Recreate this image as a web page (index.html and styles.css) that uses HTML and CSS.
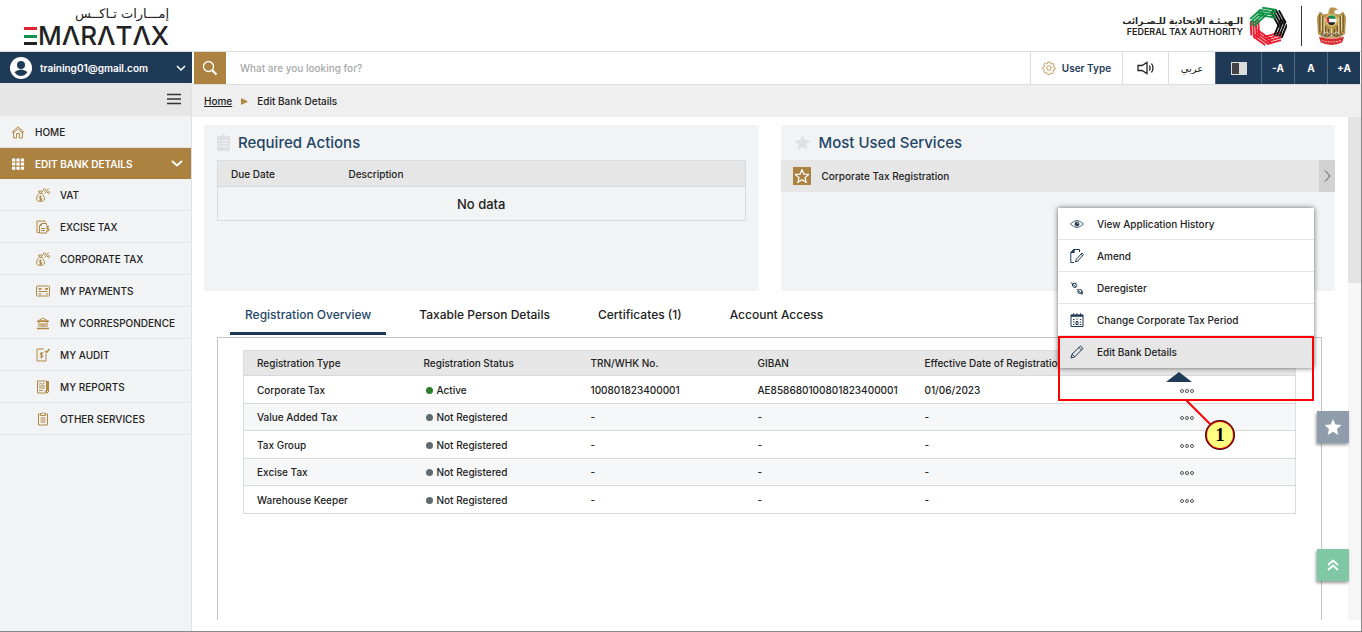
FILE: index.html
```html
<!DOCTYPE html>
<html lang="en">

<head>
    <meta charset="utf-8">
    <title>EmaraTax</title>
    <link rel="stylesheet" href="styles.css">
</head>

<body>
    <!-- Shared icons -->
    <svg class="sprite" aria-hidden="true">
        <symbol id="money" viewBox="0 0 14 14">
            <path d="M3.5 5.5C1.500 7 .6 8.800.6 10.500c0 2 1.400 3 3.900 3s3.900-1 3.900-3c0-1.700-.9-3.500-2.900-5zM3 5.300h3M3.200 5 2.600 3h3.800L5.800 5M5.600 8.500H4.200q-.9 0-.9.9t.9.900h.7q.9 0 .9.900t-.9.900H3.400M4.500 7.600v5.300M9 5.500l3.500-5M8.500.8a1 1 0 1 0 .1 0M12.600 3.600a1 1 0 1 0 .1 0"/>
        </symbol>
        <symbol id="star" viewBox="0 0 20 20">
            <path d="M10 1l2.700 6.200 6.800.6-5.100 4.500 1.500 6.600L10 15.400l-5.900 3.500 1.500-6.600L.5 7.800l6.800-.6z"/>
        </symbol>
        <symbol id="arm" viewBox="-20 -20 40 40" overflow="visible">
            <path d="M-9-18H6M-11-15.300H6M-13-12.600H6M-11-9.900H7"/>
        </symbol>
    </svg>

    <header class="header">
        <div class="brand">
            <div class="brand-ar" lang="ar" dir="rtl">إمـــارات تـاكــس</div>
            <div class="brand-en" aria-label="EMARATAX">
                <svg width="13" height="18" viewBox="0 0 13 18"><path fill="#e2232e" d="M0 0h13v3H0z"/><path fill="#11914a" d="M0 8h13v3H0z"/><path fill="#222" d="M0 15h13v3H0z"/></svg>
                <span>MΛRΛTΛX</span>
            </div>
        </div>
        <div class="authority">
            <div class="authority-name">
                <div class="authority-ar" lang="ar" dir="rtl">الـهيـئـة الاتحادية للـضـرائب</div>
                <div class="authority-en">FEDERAL TAX AUTHORITY</div>
            </div>
            <svg class="fta-logo" width="38" height="40" viewBox="-20 -20 40 40">
                <g class="red"><use href="#arm" x="-20" y="-20" width="40" height="40" transform="rotate(164)"/><use href="#arm" x="-20" y="-20" width="40" height="40" transform="rotate(215)"/><use href="#arm" x="-20" y="-20" width="40" height="40" transform="rotate(267)"/></g>
                <g class="black"><use href="#arm" x="-20" y="-20" width="40" height="40" transform="rotate(61)"/><use href="#arm" x="-20" y="-20" width="40" height="40" transform="rotate(112)"/></g>
                <g class="green"><use href="#arm" x="-20" y="-20" width="40" height="40" transform="rotate(-42)"/><use href="#arm" x="-20" y="-20" width="40" height="40" transform="rotate(9)"/></g>
            </svg>
            <svg class="emblem" width="32" height="40" viewBox="0 0 32 40">
                <path fill="#b6924d" d="M15 1h4l4 2-4 1v3l5 1 4-3 3 6-1 17-5 4H7l-5-4L1 11l3-6 4 3 5-1V4z"/>
                <path stroke="#695326" stroke-width="1.200" fill="none" d="M4 8v18M7 10v18M10 20v10M28 8v18M25 10v18M22 20v10M13 23v7M19 23v7"/>
                <path stroke="#f0dfb1" fill="none" d="M5.500 9v16M8.500 11v17M26.500 9v16M23.500 11v17M16 22v8"/>
                <circle cx="16" cy="14" r="6" fill="#fff" stroke="#d8b45d" stroke-width="1.500"/>
                <path fill="#168b4a" d="M11.500 12q1-3 4.500-3t4.500 3v.5h-9z"/><path fill="#222" d="M12 16h8q-1 3-4 3t-4-3z"/><path fill="#dc2633" d="M11 11h2.500v6H12q-1-2-1-3z"/>
                <path stroke="#ddd" fill="none" d="M6 30l5-4 5 4 5-4 5 4"/>
                <path stroke="#555" fill="none" d="M5 28l6 3 5-3 5 3 6-3"/>
                <path fill="#d92c31" d="M3 31q13 4 26 0l-2 6q-11 5-22 0z"/>
                <path stroke="#f2aaa0" stroke-width="1.200" stroke-dasharray="2 1" fill="none" d="M6 35q10 3 20 0"/>
            </svg>
        </div>
    </header>

    <div class="layout">
        <aside class="sidebar">
            <button class="account">
                <svg width="22" height="22" viewBox="0 0 22 22"><circle cx="11" cy="11" r="11" fill="#fff"/><circle cx="11" cy="8" r="4" fill="#1f3a57"/><path fill="#1f3a57" d="M4.500 15q6.500-5 13 0-2.500 4-6.500 4t-6.500-4z"/></svg>
                <span>training01@gmail.com</span>
                <svg width="10" height="6" viewBox="0 0 10 6"><path d="M1 1l4 4 4-4" fill="none" stroke="#fff" stroke-width="1.500"/></svg>
            </button>
            <div class="menu-toggle">
                <button aria-label="Toggle menu"><svg width="14" height="12" viewBox="0 0 14 12"><path d="M0 1.500h14M0 6h14M0 10.500h14" stroke="#333" stroke-width="1.300"/></svg></button>
            </div>
            <nav class="nav">
                <a href="#"><svg class="icon" viewBox="0 0 14 14"><path d="M.8 7.500 7 1.800l6.200 5.700M2.600 6.500v6.500h3V8.500h2.800V13h3V6.500M1.800 8.500 7 3.800l5.200 4.700"/></svg>HOME</a>
                <a href="#" class="active"><svg class="icon" viewBox="0 0 14 14"><path class="solid" d="M1 1.500h3.300v3H1zM5.400 1.500h3.300v3H5.400zM9.800 1.500h3.300v3H9.800zM1 5.600h3.300v3H1zM5.400 5.600h3.300v3H5.400zM9.800 5.600h3.300v3H9.800zM1 9.700h3.300v3H1zM5.400 9.700h3.300v3H5.400zM9.800 9.700h3.300v3H9.800z"/></svg><span>EDIT BANK DETAILS</span><svg width="12" height="7" viewBox="0 0 12 7"><path d="M1 1l5 4.500L11 1" fill="none" stroke="#fff" stroke-width="1.800"/></svg></a>
                <a href="#" class="sub"><svg class="icon"><use href="#money"/></svg>VAT</a>
                <a href="#" class="sub"><svg class="icon" viewBox="0 0 14 14"><path d="M3 12.500H1V1h8v1.500M5.500 3.500h5v2M3.500 5.500v7.500h7v-2M3.500 5.500l2-2v2zM5 8.500h4M5 10.500h4M12.800 6.500h-2v2h2v2h-2M11.800 5.500v6"/></svg>EXCISE TAX</a>
                <a href="#" class="sub"><svg class="icon"><use href="#money"/></svg>CORPORATE TAX</a>
                <a href="#" class="sub"><svg class="icon" viewBox="0 0 14 14"><path d="M1.500 2h11q1 0 1 1v8q0 1-1 1h-11q-1 0-1-1V3q0-1 1-1zM2.500 7.500h9M2.500 10h3M10 10h2"/><path d="M2.500 4.800h3M9 4.800h3" stroke-width="1.800"/></svg>MY PAYMENTS</a>
                <a href="#" class="sub"><svg class="icon" viewBox="0 0 14 14"><path d="M1 5.500 7 2l6 3.500zM3 6v5M5 7v4M9 7v4M11 6v5M6 11V8h2v3"/><path d="M1 12.500h12M3.500 5h7" stroke-width="1.600"/></svg>MY CORRESPONDENCE</a>
                <a href="#" class="sub"><svg class="icon" viewBox="0 0 14 14"><path d="M8 1H1v12h9V6M7.500 5H5q-1 0-1 1t1 1h1q1 0 1 1t-1 1H3.700M5.500 4v6.500"/><path d="M9 3l1.500 1.500L13.500 1" stroke-width="1.500"/></svg>MY AUDIT</a>
                <a href="#" class="sub"><svg class="icon" viewBox="0 0 14 14"><path d="M1.500 1h9v12h-9zM12.500 1v11l-2 1M3 4.500l1.500-1.500L6 4.500 8.500 3M3 6h6M3 8h6M3 10.500h4"/><path d="M11.500 1v9L9 12" stroke-width="1.500"/></svg>MY REPORTS</a>
                <a href="#" class="sub"><svg class="icon" viewBox="0 0 14 14"><path d="M4.500 2H2.500v11h9V2h-2M4.500 3.500V1.500H6L7 .5l1 1h1.500v2zM4.500 6h5M4.500 8h5M4.500 10h5"/></svg>OTHER SERVICES</a>
            </nav>
        </aside>

        <main class="main">
            <div class="topbar">
                <form class="search" role="search">
                    <button type="button" aria-label="Search"><svg width="16" height="16" viewBox="0 0 16 16"><circle cx="6.500" cy="6.500" r="5" fill="none" stroke="#fff" stroke-width="1.300"/><path d="M10 10l4.500 4.500" stroke="#fff" stroke-width="2.200"/></svg></button>
                    <input type="text" placeholder="What are you looking for?" aria-label="Search">
                </form>
                <button class="tool user-type"><svg width="14" height="14" viewBox="0 0 14 14" fill="none" stroke="#c09a5b"><circle cx="7" cy="7" r="2.200"/><path d="M5.800 1h2.400l.3 1.500 1.300.6 1.300-.8 1.200 1.700-.9 1.200.4 1.300 1.200.3v1.800l-1.400.4-.5 1.200.7 1.300-1.500 1.300-1.300-.7-1 .4-.4 1H6l-.4-1.300-1.300-.5-1.300.7-1.300-1.500.7-1.300-.5-1-1.200-.4V6.500l1.300-.4.5-1.300-.8-1.200 1.500-1.300 1.300.8 1-.5z"/></svg>User Type</button>
                <button class="tool sound" aria-label="Read aloud"><svg width="17" height="14" viewBox="0 0 17 14" fill="none" stroke="#222" stroke-width="1.300"><path d="M1 4.500h4L10 1.500v11L5 9.500H1zM12.300 4.500q1.500 2.500 0 5M14.500 2.500q3 4.500 0 9"/></svg></button>
                <button class="tool language" lang="ar">عربي</button>
                <button class="tool dark contrast" aria-label="Contrast"><svg width="16" height="13" viewBox="0 0 16 13"><path fill="#ddd" d="M0 0h16v13H0z"/><path fill="#444" d="M1 1h7v11H1z"/></svg></button>
                <button class="tool dark">-A</button>
                <button class="tool dark">A</button>
                <button class="tool dark">+A</button>
            </div>
            <div class="breadcrumb">
                <a href="#">Home</a>
                <svg width="7" height="7" viewBox="0 0 7 7"><path fill="#b18843" d="M0 0l7 3.500L0 7z"/></svg>
                <span>Edit Bank Details</span>
            </div>

            <div class="body">
                <div class="content">
                    <div class="cards">
                        <section class="card actions-card">
                            <h2><svg width="13" height="17" viewBox="0 0 13 17"><path fill="#dfe0e1" d="M1 2h3q2.500-3.500 5 0h3l1 1v13l-1 1H1l-1-1V3z"/><path stroke="#f2f3f5" d="M2 6.500h1M4.500 6.500H11M2 9.500h1M4.500 9.500H11M2 12.500h1M4.500 12.500H11"/></svg>Required Actions</h2>
                            <table class="actions">
                                <thead><tr><th class="due">Due Date</th><th>Description</th></tr></thead>
                                <tbody><tr><td colspan="2">No data</td></tr></tbody>
                            </table>
                        </section>
                        <section class="card">
                            <h2><svg width="17" height="17" fill="#dfe0e1"><use href="#star"/></svg>Most Used Services</h2>
                            <a href="#" class="service">
                                <span class="service-icon"><svg width="14" height="14" fill="none" stroke="#fff" stroke-width="1.800"><use href="#star"/></svg></span>
                                <span>Corporate Tax Registration</span>
                                <span class="service-go"><svg width="7" height="12" viewBox="0 0 7 12"><path d="M1 .5 6 6l-5 5.500" fill="none" stroke="#555"/></svg></span>
                            </a>
                        </section>
                    </div>

                    <div class="tabs" role="tablist">
                        <button role="tab" class="active" aria-selected="true">Registration Overview</button>
                        <button role="tab">Taxable Person Details</button>
                        <button role="tab">Certificates (1)</button>
                        <button role="tab">Account Access</button>
                    </div>

                    <section class="panel">
                        <table class="registrations">
                            <thead>
                                <tr>
                                    <th>Registration Type</th>
                                    <th>Registration Status</th>
                                    <th>TRN/WHK No.</th>
                                    <th>GIBAN</th>
                                    <th>Effective Date of Registration</th>
                                    <th class="more"></th>
                                </tr>
                            </thead>
                            <tbody>
                                <tr><td>Corporate Tax</td><td><i class="dot on"></i>Active</td><td>100801823400001</td><td>AE858680100801823400001</td><td>01/06/2023</td><td class="more"><button aria-label="More"><i></i><i></i><i></i></button></td></tr>
                                <tr><td>Value Added Tax</td><td><i class="dot"></i>Not Registered</td><td>-</td><td>-</td><td>-</td><td class="more"><button aria-label="More"><i></i><i></i><i></i></button></td></tr>
                                <tr><td>Tax Group</td><td><i class="dot"></i>Not Registered</td><td>-</td><td>-</td><td>-</td><td class="more"><button aria-label="More"><i></i><i></i><i></i></button></td></tr>
                                <tr><td>Excise Tax</td><td><i class="dot"></i>Not Registered</td><td>-</td><td>-</td><td>-</td><td class="more"><button aria-label="More"><i></i><i></i><i></i></button></td></tr>
                                <tr><td>Warehouse Keeper</td><td><i class="dot"></i>Not Registered</td><td>-</td><td>-</td><td>-</td><td class="more"><button aria-label="More"><i></i><i></i><i></i></button></td></tr>
                            </tbody>
                        </table>
                    </section>
                </div>
                <div class="scrollbar"><div class="thumb"></div></div>

                <!-- Row menu -->
                <div class="popup">
                    <a href="#"><svg class="icon" viewBox="0 0 14 14"><path stroke-width=".8" d="M.5 7Q7 0 13.500 7 7 14 .5 7z"/><circle class="solid" cx="7" cy="7" r="2"/><circle cx="7.800" cy="6.200" r=".6" fill="#fff" stroke="none"/></svg>View Application History</a>
                    <a href="#"><svg class="icon" viewBox="0 0 14 14"><path d="M9.500 3V.5H4L.8 3.500v10H4M4 .5v3H.8M5.500 13l.7-2.500L12 4l1.500 1.500-5.700 6.500zM11 5.200l1.500 1.400"/><path class="solid" d="M4 .5v3H.8z"/></svg>Amend</a>
                    <a href="#"><svg class="icon" viewBox="0 0 14 14"><path d="M.8 1.500 2.500 3M2.500 3q2-1.500 3.500 0t0 3.200zM5 2.800l1.500-1M2.500 3v2q1 2 3.500 1.200M8 9.500q2-2 3.500-.5t-.2 3.500zM8 9.500v2.200l2.500 1H13M11.500 9l1 3.500M7 8l1 1.500"/></svg>Deregister</a>
                    <a href="#"><svg class="icon" viewBox="0 0 14 14"><path d="M1 2h12v11.500H1z"/><path d="M.8 2.800h12.400" stroke-width="2"/><path d="M3.500.3v2M7 .3v2M10.500.3v2M3 6.500h1.500M6.300 6h1.500M9.800 6.500h1.500M3 9h1.500M9.800 9h1.500M3 11.500h1.500M9.800 11.500h1.500M6 8.500h2v3H6z"/></svg>Change Corporate Tax Period</a>
                    <a href="#" class="current"><svg class="icon" viewBox="0 0 14 14"><path d="M1 13l1-3.800L10.500 1l2.500 2.500-8.300 8.300zM9 2.500l2.500 2.500M2 9.200l2.700 2.600"/></svg>Edit Bank Details</a>
                    <div class="pointer"></div>
                    <div class="highlight"></div>
                    <svg class="connector" width="30" height="28" viewBox="0 0 30 28"><path d="M2 0l26 26" stroke="#f00" stroke-width="2"/></svg>
                    <div class="step">1</div>
                </div>
                <button class="float favourite" aria-label="Favourites"><svg width="18" height="18" fill="#fff"><use href="#star"/></svg></button>
                <button class="float to-top" aria-label="Back to top"><svg width="12" height="12" viewBox="0 0 12 12"><path d="M1 6l5-4.500L11 6M1 11l5-4.500 5 4.500" fill="none" stroke="#fff" stroke-width="1.800"/></svg></button>
            </div>
        </main>
    </div>
</body>

</html>
```

FILE: styles.css
```css
* {
    box-sizing: border-box;
}

body {
    display: flex;
    flex-direction: column;
    min-height: 100vh;
    margin: 0;
    border-right: 1px solid #888;
    border-bottom: 1px solid #888;
    font-family: Inter, "DejaVu Sans", sans-serif;
    font-size: 10px;
    font-weight: 500;
    color: #222;
    background-color: #fff;
}

a {
    color: inherit;
    text-decoration: none;
}

button {
    padding: 0;
    border: none;
    background: none;
    font: inherit;
    color: inherit;
    cursor: pointer;
}

svg {
    flex: none;
}

.sprite {
    position: absolute;
    width: 0;
    height: 0;
}

.icon {
    width: 14px;
    height: 14px;
    fill: none;
    stroke: #b18843;
    stroke-width: 1;
}

.icon .solid {
    fill: #1f3a57;
}

/* Header */
.header {
    display: flex;
    justify-content: space-between;
    height: 52px;
    padding: 0 14px 0 24px;
    border-bottom: 1px solid #ddd;
}

.brand {
    display: flex;
    flex-direction: column;
    align-items: flex-end;
    padding-top: 4px;
}

.brand-ar {
    font-family: "DejaVu Sans", sans-serif;
    font-size: 13px;
    font-weight: 400;
    line-height: 20px;
}

.brand-en {
    display: flex;
    align-items: center;
    gap: 1px;
    font-size: 26px;
    font-weight: 500;
    line-height: 24px;
}

.authority {
    display: flex;
    align-items: center;
    height: 51px;
}

.authority-name {
    padding-right: 6px;
    text-align: right;
}

.authority-ar {
    font-family: "DejaVu Sans", sans-serif;
    font-size: 9px;
    font-weight: 700;
    line-height: 12px;
}

.authority-en {
    font-size: 9px;
    font-weight: 600;
    line-height: 10px;
}

.fta-logo {
    fill: none;
    stroke-width: 2;
}

.green {
    stroke: #0e9347;
}

.black {
    stroke: #111;
}

.red {
    stroke: #ed1c2e;
}

.emblem {
    width: 46px;
    margin-left: 14px;
    padding-left: 14px;
    border-left: 1px solid #333;
}

/* Sidebar */
.layout {
    display: flex;
    flex: 1;
}

.sidebar {
    width: 192px;
    background-color: #f2f3f5;
    border-right: 1px solid #e0e1e3;
}

.account {
    display: flex;
    align-items: center;
    gap: 8px;
    width: 192px;
    height: 31px;
    padding: 0 6px 0 10px;
    background-color: #1f3a57;
    color: #fff;
    font-weight: 600;
    text-align: left;
}

.account span {
    flex: 1;
}

.menu-toggle {
    display: flex;
    align-items: center;
    justify-content: flex-end;
    height: 33px;
    padding-right: 10px;
    background-color: #e6e6e6;
}

.nav a {
    display: flex;
    align-items: center;
    gap: 10px;
    height: 32px;
    padding: 0 8px 0 11px;
    border-bottom: 1px solid #e4e5e7;
    white-space: nowrap;
}

.nav a.sub {
    padding-left: 36px;
}

.nav a.active {
    height: 31px;
    border: none;
    background-color: #ac8240;
    color: #fff;
    font-weight: 600;
}

.nav a.active span {
    flex: 1;
}

.nav .active .icon,
.nav .active .solid {
    stroke: none;
    fill: #fff;
}

/* Top bar */
.main {
    display: flex;
    flex-direction: column;
    flex: 1;
    min-width: 0;
}

.topbar {
    display: flex;
    height: 32px;
    padding: 0 1px 0 2px;
}

.search {
    display: flex;
    flex: 1;
}

.search button {
    display: flex;
    align-items: center;
    justify-content: center;
    width: 32px;
    background-color: #ac8240;
}

.search input {
    flex: 1;
    padding: 0 14px;
    border: none;
    font: inherit;
}

.search input::placeholder {
    color: #a8a8a8;
}

.tool {
    display: flex;
    align-items: center;
    justify-content: center;
    width: 33px;
    border-left: 1px solid #ddd;
}

.user-type {
    gap: 6px;
    width: 92px;
    color: #1f3a57;
    font-weight: 600;
}

.sound {
    width: 46px;
}

.language {
    width: 47px;
    font-family: "DejaVu Sans", sans-serif;
}

.dark {
    background-color: #1f3a57;
    border-color: #52677d;
    color: #fff;
    font-weight: 700;
}

.contrast {
    width: 46px;
}

.breadcrumb {
    display: flex;
    align-items: center;
    gap: 9px;
    height: 33px;
    padding-left: 12px;
    border-top: 1px solid #ddd;
    background-color: #efefef;
}

.breadcrumb a {
    text-decoration: underline;
}

/* Content */
.body {
    position: relative;
    display: flex;
    flex: 1;
    margin-bottom: 11px;
}

.content {
    display: flex;
    flex-direction: column;
    flex: 1;
    min-width: 0;
    padding: 8px 13px 0 12px;
}

.scrollbar {
    width: 13px;
    background-color: #f6f6f6;
}

.thumb {
    height: 33%;
    background-color: #e4e4e4;
}

.cards {
    display: grid;
    grid-template-columns: 1fr 1fr;
    gap: 22px;
}

.card {
    height: 166px;
    background-color: #f2f3f5;
}

.actions-card {
    padding-right: 13px;
}

.card h2 {
    display: flex;
    align-items: center;
    gap: 8px;
    height: 35px;
    margin: 0;
    padding-left: 13px;
    color: #244566;
    font-size: 15px;
    font-weight: 500;
}

table {
    border-collapse: collapse;
    table-layout: fixed;
    width: 100%;
}

th,
td {
    padding: 0 0 0 13px;
    font-weight: 500;
    text-align: left;
    white-space: nowrap;
}

th {
    background-color: #e6e6e6;
}

.actions {
    width: auto;
    min-width: calc(100% - 13px);
    margin-left: 13px;
    border: 1px solid #d9dcdf;
}

.actions th {
    height: 26px;
    border-bottom: 1px solid #d3dae2;
}

.actions .due {
    width: 118px;
}

.actions td {
    height: 34px;
    padding: 0;
    font-size: 13px;
    text-align: center;
}

.service {
    display: flex;
    align-items: center;
    gap: 10px;
    height: 32px;
    padding-left: 12px;
    background-color: #e6e6e6;
}

.service-icon {
    display: flex;
    align-items: center;
    justify-content: center;
    width: 18px;
    height: 18px;
    margin-right: 1px;
    background-color: #ac8240;
}

.service-go {
    display: flex;
    align-items: center;
    justify-content: center;
    width: 16px;
    height: 32px;
    margin-left: auto;
    background-color: #d2d2d2;
}

.tabs {
    display: flex;
    gap: 18px;
    padding: 6px 26px 2px;
}

.tabs button {
    height: 38px;
    padding: 0 15px;
    border-bottom: 3px solid transparent;
    font-size: 12px;
}

.tabs .active {
    color: #244566;
    border-color: #1f3a57;
}

.panel {
    flex: 1;
    margin: 0 13px;
    padding: 12px 25px 0;
    border: 1px solid #c4c4c4;
    border-bottom: none;
}

.registrations {
    border: 1px solid #ddd;
}

.registrations th {
    width: 167px;
    height: 25px;
    border-bottom: 1px solid #d3dae2;
}

.registrations td {
    height: 28px;
    border-bottom: 1px solid #d8d8d8;
}

.registrations tr:nth-child(even) td {
    height: 27px;
    background-color: #f6f7f9;
}

.registrations .more {
    width: auto;
    padding: 0;
    text-align: center;
}

.more button {
    display: inline-flex;
    gap: 1px;
    vertical-align: middle;
}

.more i {
    width: 4px;
    height: 4px;
    border: 1px solid #555;
    border-radius: 50%;
}

.dot {
    display: inline-block;
    width: 7px;
    height: 7px;
    margin: 0 4px 0 2px;
    border-radius: 50%;
    background-color: #5f6b70;
}

.dot.on {
    background-color: #2b7d2b;
}

/* Row menu and step marker */
.popup {
    position: absolute;
    top: 91px;
    right: 47px;
    width: 256px;
    background-color: #fff;
    box-shadow: 0 0 5px rgba(0, 0, 0, 0.6);
}

.popup a {
    display: flex;
    align-items: center;
    gap: 13px;
    height: 32px;
    padding-left: 12px;
    border-bottom: 1px solid #e4e4e4;
}

.popup .icon {
    stroke: #1f3a57;
}

.popup .current {
    background-color: #e6e6e6;
}

.pointer {
    position: absolute;
    top: 164px;
    left: 108px;
    border: 13px solid transparent;
    border-top: none;
    border-bottom: 10px solid #1f3a57;
}

.highlight {
    position: absolute;
    top: 128px;
    left: 0;
    width: 100%;
    height: 65px;
    border: 2px solid #f00;
}

.connector {
    position: absolute;
    top: 192px;
    left: 126px;
}

.step {
    position: absolute;
    top: 212px;
    left: 147px;
    width: 30px;
    height: 30px;
    border: 2px solid #e00;
    border-radius: 50%;
    outline: 1px solid #222;
    outline-offset: -1px;
    background-color: #ffff80;
    color: #000;
    font-family: "Liberation Serif", serif;
    font-size: 19px;
    font-weight: 700;
    line-height: 26px;
    text-align: center;
}

.float {
    position: absolute;
    right: 12px;
    display: flex;
    align-items: center;
    justify-content: center;
    width: 32px;
    height: 32px;
    box-shadow: -1px 2px 3px rgba(0, 0, 0, 0.4);
}

.favourite {
    bottom: 177px;
    background-color: #8e9cab;
}

.to-top {
    bottom: 39px;
    background-color: #80c7a5;
}
```
